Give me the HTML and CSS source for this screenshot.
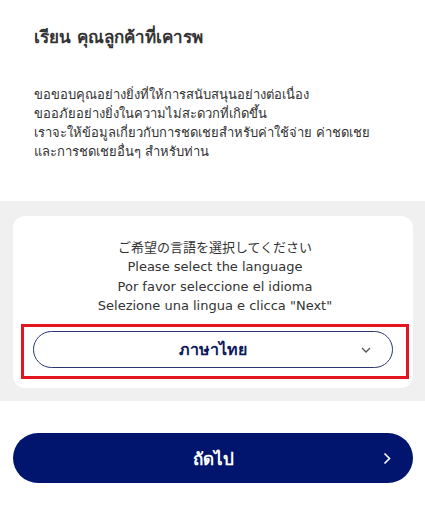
FILE: index.html
```html
<!DOCTYPE html>
<html lang="th">
  <head>
    <meta charset="UTF-8" />
    <title>เลือกภาษา</title>
    <meta name="viewport" content="width=device-width, initial-scale=1.0" />
    <link rel="stylesheet" href="styles.css">
  </head>
  <body>
    <div class="intro">
      <h1>เรียน คุณลูกค้าที่เคารพ</h1>
      <p>
        ขอขอบคุณอย่างยิ่งที่ให้การสนับสนุนอย่างต่อเนื่อง<br />
        ขออภัยอย่างยิ่งในความไม่สะดวกที่เกิดขึ้น<br />
        เราจะให้ข้อมูลเกี่ยวกับการชดเชยสำหรับค่าใช้จ่าย ค่าชดเชย<br />
        และการชดเชยอื่นๆ สำหรับท่าน
      </p>
    </div>
    <div class="lang-area">
      <div class="lang-card">
        <p class="lang-note">
          <span class="ja">ご希望の言語を選択してください</span><br />
          Please select the language<br />
          Por favor seleccione el idioma<br />
          Selezione una lingua e clicca "Next"
        </p>
        <div class="highlight">
          <div class="lang-select">
            <span>ภาษาไทย</span>
            <svg class="chev-down" width="10" height="6" viewBox="0 0 10 6">
              <path d="M1 1l4 4 4-4" fill="none" stroke="#555" stroke-width="1.3" />
            </svg>
          </div>
        </div>
      </div>
    </div>
    <div class="actions">
      <button class="next-btn" type="button">
        <span>ถัดไป</span>
        <svg class="chev-right" width="8" height="13" viewBox="0 0 8 13">
          <path d="M1.5 1.5l5 5-5 5" fill="none" stroke="#fff" stroke-width="1.6" />
        </svg>
      </button>
    </div>
  </body>
</html>
```

FILE: styles.css
```css
body {
  margin: 0;
  font-family: Tahoma, "DejaVu Sans", "Noto Sans", "Noto Sans CJK JP", sans-serif;
  color: #333;
  background: #fff;
}

.intro {
  padding: 25px 34px 40px;
}

.intro h1 {
  margin: 0 0 36px;
  font-size: 17px;
  font-weight: bold;
  line-height: 24px;
}

.intro p {
  margin: 0;
  font-size: 13px;
  line-height: 19px;
}

.lang-area {
  background: #f0f0f0;
  padding: 15px 12px 13px 13px;
}

.lang-card {
  background: #fff;
  border-radius: 12px;
  padding: 21px 4px 9px 8px;
}

.lang-note {
  margin: 0 0 9px;
  text-align: center;
  font-size: 13px;
  line-height: 19.3px;
}

.ja {
  font-family: "Noto Sans CJK JP", sans-serif;
}

.highlight {
  border: 3px solid #e3151f;
  padding: 4px 13px 8px 9px;
}

.lang-select {
  position: relative;
  height: 37px;
  border: 1px solid #2c3670;
  border-radius: 19px;
  box-sizing: border-box;
  display: flex;
  align-items: center;
  justify-content: center;
  color: #0d1a5c;
  font-size: 16px;
  font-weight: bold;
}

.chev-down {
  position: absolute;
  right: 21px;
  top: 15px;
}

.actions {
  padding: 32px 12px 29px 13px;
}

.next-btn {
  position: relative;
  width: 100%;
  height: 50px;
  border: none;
  border-radius: 25px;
  background: #01156e;
  color: #fff;
  font-family: inherit;
  font-size: 17px;
  font-weight: bold;
}

.chev-right {
  position: absolute;
  right: 22px;
  top: 19px;
}
```
